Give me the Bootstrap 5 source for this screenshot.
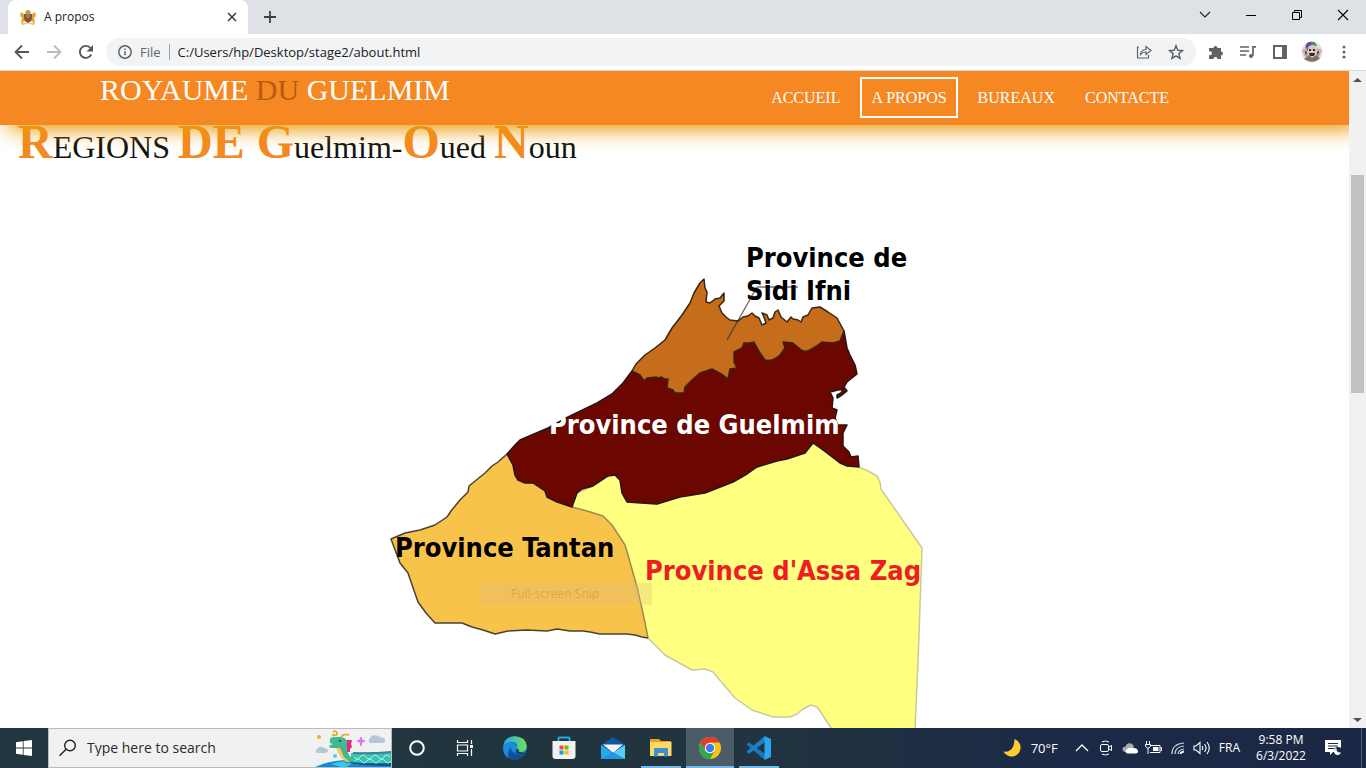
<!DOCTYPE html>
<html lang="fr">
<head>
<meta charset="utf-8">
<meta name="viewport" content="width=device-width, initial-scale=1">
<title>A propos</title>
<link href="https://cdn.jsdelivr.net/npm/bootstrap@5.3.0/dist/css/bootstrap.min.css" rel="stylesheet">
<script src="https://cdn.jsdelivr.net/npm/bootstrap@5.3.0/dist/js/bootstrap.bundle.min.js"></script>
<style>
body { font-family: "Open Sans", "Noto Sans", sans-serif; font-size: 12px; line-height: 16px; color: #202124; }
button { background: none; border: 0; padding: 0; color: inherit; }
svg { display: block; flex: none; }
.glyph { display: flex; align-items: center; justify-content: center; flex: none; }

/* browser frame */
.tabstrip { background: #dee1e6; height: 34px; }
.tab-item { width: 240px; height: 34px; border-radius: 8px 8px 0 0; }
.win-btn { width: 46px; height: 30px; }
.toolbar { height: 37px; border-bottom: 1px solid #d5d7da; color: #5f6368; padding: 0 2px; }
.nav-btn { width: 32px; height: 28px; }
.omnibox { background: #f1f3f4; height: 28px; border-radius: 14px; }
.omnibox input { font-size: 13px; line-height: 20px; background: none; border: 0; padding: 0; color: #202124; outline: 0; min-width: 0; }
.scheme { font-size: 13px; border-right: 1px solid #9aa0a6; }

/* web page */
.page { font-family: "Liberation Serif", serif; background: #fff; min-width: 0; }
.site-head { background: #f58822; height: 54px; padding: 2px 170px 0 100px; box-shadow: 8px 5px 20px #ea9b08; z-index: 1; }
.site-name { font-size: 30px; line-height: 34px; color: #fff; text-decoration: none; }
.site-name span { color: #b35c0d; }
.site-menu { gap: 10px; padding-top: 4px; }
.site-menu a { color: #fff; font-size: 16px; line-height: 21px; padding: 8px; border: 2px solid transparent; text-decoration: none; }
.site-menu a.active { border-color: #fff; padding: 8px 9px; }
.region-title { font-size: 32px; line-height: 34px; font-weight: 400; color: #111; padding-left: 18px; margin-bottom: 66px; }
.region-title b { font-size: 48px; color: #f58822; }
.map text { font-family: "DejaVu Sans Condensed", "DejaVu Sans", sans-serif; font-weight: 700; font-size: 27px; }
.map .ghost { font-family: "Open Sans", sans-serif; font-weight: 400; font-size: 12px; }
.scroll-rail { width: 17px; background: #f1f1f1; }
.scroll-thumb { width: 13px; background: #c1c1c1; }

/* taskbar */
.taskbar { height: 40px; background: linear-gradient(90deg, #20373f, #21343f 55%, #1b2947 80%, #1b2845); color: #fff; }
.start { width: 48px; }
.search-box { width: 344px; background: #f1f1f1; border: 1px solid #bcbcbc; }
.search-box input { background: none; border: 0; outline: 0; padding: 0; font-size: 14px; color: #222; width: 220px; }
.search-box input::placeholder { color: #2b2b2b; opacity: 1; }
.app-btn { width: 49px; height: 40px; }
.app-btn.open { border-bottom: 2px solid #76b9ed; padding-top: 2px; width: 40px; margin: 0 5px 0 4px; }
.app-btn.front { background: #4c5c66; width: 48px; margin: 0 1px 0 0; }
.tray-btn { width: 24px; height: 40px; }
.weather { font-size: 13px; }
.lang { padding: 0 5px; }
.clock { width: 64px; }
.notice { margin-right: 14px; }
</style>
</head>
<body class="vh-100 d-flex flex-column overflow-hidden">

<div class="tabstrip d-flex flex-shrink-0 ps-2">
  <div class="tab-item bg-white d-flex align-items-center px-2">
    <svg class="ms-1" width="16" height="16" viewBox="0 0 16 16"><path d="M5 3Q8-1 11 3L10 5H6Z" fill="#c99a2b"/><path d="M1 3 4 5 5 12 1 14 2 9 0 7ZM15 3 12 5 11 12 15 14 14 9 16 7Z" fill="#dba733"/><path d="M4 5h8v5q-1 3-4 4-3-1-4-4Z" fill="#b5471f"/><circle cx="8" cy="7" r="2" fill="#3aa0c0"/><path d="M6 10h4l-2 2Z" fill="#28794a"/><path d="M1 13q7 3 14 0l-1 3q-6-2-12 0Z" fill="#e2b64b"/></svg>
    <span class="ms-2 flex-grow-1">A propos</span>
    <button class="glyph" aria-label="Close tab"><svg width="16" height="16" viewBox="0 0 16 16" stroke="#3c4043" stroke-width="1.6"><path d="m4 4 8 8M12 4l-8 8"/></svg></button>
  </div>
  <button class="glyph ms-2 px-1" aria-label="New tab"><svg width="20" height="16" viewBox="0 0 20 16" stroke="#3c4043" stroke-width="1.8"><path d="M10 2v12M4 8h12"/></svg></button>
  <div class="ms-auto d-flex">
    <button class="win-btn glyph" aria-label="Search tabs"><svg width="12" height="8" viewBox="0 0 12 8" fill="none" stroke="#222" stroke-width="1.1"><path d="m1 1 5 5 5-5"/></svg></button>
    <button class="win-btn glyph" aria-label="Minimize"><svg width="10" height="10" viewBox="0 0 10 10" fill="#000"><path d="M0 5h10v1H0z"/></svg></button>
    <button class="win-btn glyph" aria-label="Restore"><svg width="10" height="10" viewBox="0 0 10 10" fill="none" stroke="#000"><path d="M.5 2.500h7v7h-7zM2.500 2.500v-2h7v7h-2"/></svg></button>
    <button class="win-btn glyph" aria-label="Close"><svg width="12" height="12" viewBox="0 0 12 12" stroke="#000" stroke-width="1.1"><path d="m1 1 10 10M11 1 1 11"/></svg></button>
  </div>
</div>

<div class="toolbar bg-white d-flex align-items-center flex-shrink-0">
  <div class="d-flex ms-1 me-1">
    <button class="nav-btn glyph" aria-label="Back"><svg width="16" height="16" viewBox="0 0 16 16" fill="none" stroke="#54585c" stroke-width="1.8"><path d="M15 8H2M8 1.500 1.500 8 8 14.500"/></svg></button>
    <button class="nav-btn glyph" aria-label="Forward"><svg width="16" height="16" viewBox="0 0 16 16" fill="none" stroke="#b9bbbe" stroke-width="1.8"><path d="M1 8h13M8 1.500 14.500 8 8 14.500"/></svg></button>
    <button class="nav-btn glyph" aria-label="Reload"><svg width="16" height="16" viewBox="0 0 16 16"><path d="M13.300 10.500A6 6 0 1 1 12.500 4" fill="none" stroke="#54585c" stroke-width="1.9"/><path d="M15 1v6.500H8.500Z" fill="#54585c"/></svg></button>
  </div>
  <div class="omnibox d-flex align-items-center flex-grow-1 ps-2 pe-1">
    <svg class="mx-1" width="14" height="14" viewBox="0 0 14 14" fill="none" stroke="#5f6368" stroke-width="1.500"><circle cx="7" cy="7" r="6.200"/><path d="M7 6.200v4M7 3.500v1.600"/></svg>
    <label class="scheme ms-1 pe-2 me-2" for="address">File</label>
    <input id="address" class="flex-grow-1" type="text" value="C:/Users/hp/Desktop/stage2/about.html">
    <button class="glyph nav-btn" aria-label="Share"><svg width="16" height="16" viewBox="0 0 16 16" fill="none" stroke="#5f6368" stroke-width="1.200"><path d="M3 3H1.500v11h11v-3M4.500 10.500Q5 6 10 5.500V2.500L15 6.500 10 10.500V8Q6.500 8 4.500 10.500Z"/></svg></button>
    <button class="nav-btn glyph" aria-label="Bookmark"><svg width="16" height="16" viewBox="0 0 16 16" fill="none" stroke="#5f6368" stroke-width="1.500"><path d="m8 1.800 1.800 4.400 4.700.4-3.600 3 1.100 4.700L8 11.800l-4 2.500 1.100-4.700-3.600-3 4.700-.4Z"/></svg></button>
  </div>
  <div class="d-flex ms-1 me-1">
    <button class="nav-btn glyph" aria-label="Extensions"><svg width="16" height="16" viewBox="0 0 16 16" fill="#5f6368"><path d="M1 4h4.500a2 2 0 1 1 4 0H13v3.500a2 2 0 1 1 0 4V15H9.500a2 2 0 1 0-4 0H1v-4a2 2 0 1 0 0-3.500Z"/></svg></button>
    <button class="nav-btn glyph" aria-label="Media"><svg width="16" height="14" viewBox="0 0 16 14" fill="none" stroke="#5f6368" stroke-width="1.700"><path d="M0 2h9M0 6h9M0 10h6M16 1.800h-3v9"/><circle cx="11" cy="11" r="2" fill="#5f6368" stroke="none"/></svg></button>
    <button class="nav-btn glyph" aria-label="Side panel"><svg width="14" height="14" viewBox="0 0 14 14"><path fill="#5f6368" d="M0 0h14v14H0z"/><path fill="#fff" d="M2 2h7v10H2z"/></svg></button>
    <button class="nav-btn glyph" aria-label="Profile"><svg width="22" height="22" viewBox="0 0 22 22"><circle cx="11" cy="11" r="10.500" fill="#e3e0de"/><path d="M5 10Q3 3 8 1q6-1 8 4l-5-1-4 6Z" fill="#6b46a8"/><path d="M10 1q4-1 5 3l-4 1Z" fill="#3f9b50"/><path d="M7 6q4-4 9 0l-1 8-4 4-4-4Z" fill="#d9c8c2"/><path d="M1 9l5-2 1 8-3 1ZM21 9l-5-2-1 8 3 1Z" fill="#cbaea3"/><path d="M8 8h2v2H8zM12 8h2v2h-2zM8 12h6l-1 3H9zM4 10l2 1-1 4ZM18 10l-2 1 1 4Z" fill="#302a2c"/><path d="M3 18l5-4 3 3 4-3 4 3q-7 7-16 1Z" fill="#7d716b"/></svg></button>
    <button class="nav-btn glyph" aria-label="Menu"><svg width="4" height="14" viewBox="0 0 4 14" fill="#5f6368"><circle cx="2" cy="2" r="1.500"/><circle cx="2" cy="7" r="1.500"/><circle cx="2" cy="12" r="1.500"/></svg></button>
  </div>
</div>

<div class="d-flex flex-grow-1 overflow-hidden">
  <div class="page flex-grow-1 overflow-hidden">
    <header class="site-head position-relative d-flex justify-content-between align-items-start">
      <a class="site-name" href="#">ROYAUME <span>DU</span> GUELMIM</a>
      <nav class="site-menu d-flex">
        <a href="#">ACCUEIL</a>
        <a class="active" href="#">A PROPOS</a>
        <a href="#">BUREAUX</a>
        <a href="#">CONTACTE</a>
      </nav>
    </header>
    <h1 class="region-title"><b>R</b>EGIONS <b>DE G</b>uelmim-<b>O</b>ued <b>N</b>oun</h1>
    <svg class="map mx-auto" width="600" height="600" viewBox="375 230 600 600" stroke-linejoin="round">
      <path fill="#ffff80" stroke="#c9c9a0" stroke-width="1.500" d="M572 507 577 493 593 486 608 476 615 475 620 480 622 493 627 502 657 504 813 443 859 467 868 471 877 476 880 482 881 489 922 548 918 663 915 728 912 800H870L831 728 820 711 817 707 811 705 803 709 797 714 790 717 773 717 752 710 735 698 713 672 705 669 692 670 665 655 648 638Z"/>
      <path fill="#f8c34a" d="M507 454 498 462 492 466 485 473 469 486 468 492 460 500 451 511 447 517 435 525 420 530 405 533 391 539 400 563 408 573 418 602 426 613 435 623 462 623 472 627 483 630 495 634 508 631 527 630 547 631 557 629 570 631 583 631 590 632 600 634 627 634 635 635 642 637 648 638 643 613 637 587 628 555 625 545 612 525 603 516 587 511 572 507Z"/>
      <path fill="none" stroke="#9a8a55" stroke-width="1.500" d="M648 638 643 613 637 587 628 555 625 545 612 525 603 516 587 511 572 507"/>
      <path fill="none" stroke="#4c4130" stroke-width="1.500" d="M507 454 498 462 492 466 485 473 469 486 468 492 460 500 451 511 447 517 435 525 420 530 405 533 391 539 400 563 408 573 418 602 426 613 435 623 462 623 472 627 483 630 495 634 508 631 527 630 547 631 557 629 570 631 583 631 590 632 600 634 627 634 635 635 642 637 648 638"/>
      <path fill="#6b0600" stroke="#2a1512" stroke-width="1.500" d="M632 371 623 383 612 394 597 403 568 417 548 428 520 440 515 445 507 454 513 465 515 475 518 480 525 483 533 483 545 491 547 497 557 502 572 507 577 493 582 489 593 486 608 476 615 475 620 480 622 493 627 502 657 504 680 497 705 493 733 482 747 474 757 467 777 461 787 459 805 453 813 443 823 450 840 463 847 466 859 467 858 456 851 457 849 452 843 446 843 433 847 425 838 425 835 418 837 410 832 408 833 398 830 392 838 390 843 389 841 393 837 395 837 398 842 395 847 391 844 387 847 382 857 374 855 365 850 355 847 348 844 331 760 330 680 360Z"/>
      <path fill="#c56d1b" stroke="#3b2412" stroke-width="1.500" d="M632 371 636 364 645 355 655 348 665 340 672 328 682 315 690 303 694 293 700 283 704 279 705 288 707 292 706 302 710 303 715 299 720 298 724 293 724 301 719 306 722 313 726 317 730 320 738 321 743 317 748 316 752 313 755 316 759 318 762 325 766 323 764 317 762 313 767 315 769 320 773 318 775 312 778 310 781 317 787 322 791 317 793 319 798 320 801 322 803 317 808 315 812 308 820 307 828 312 837 318 844 331 840 341 833 343 822 342 815 347 810 350Q804 353 800 349L793 343 783 342 785 348 780 355Q772 362 765 360L760 353 754 342 750 343 744 343 742 348 734 352 734 362 737 368 730 369 728 379 723 375 712 369 700 373 692 380 685 387 684 393 675 393 673 390 667 388 668 379 664 379 662 377 658 378 656 377 647 378 644 381 640 375Z"/>
      <path fill="none" stroke="#2b2b2b" stroke-opacity=".65" stroke-width="1.500" d="M727 340 757 287H798"/>
      <text x="746" y="267">Province de</text>
      <text x="746" y="300">Sidi Ifni</text>
      <text x="549" y="434" fill="#fff">Province de Guelmim</text>
      <text x="395" y="557">Province Tantan</text>
      <text x="645" y="580" fill="#ee1c25">Province d'Assa Zag</text>
      <path d="M480 583h172v22H480z" fill="#e2bd7c" fill-opacity=".35"/>
      <text class="ghost" x="511" y="598" fill="#deaa3b">Full-screen Snip</text>
    </svg>
  </div>
  <div class="scroll-rail d-flex flex-column align-items-center flex-shrink-0 overflow-hidden">
    <svg width="17" height="17" viewBox="0 0 17 17"><path d="M4 11h9L8.500 7Z" fill="#505050"/></svg>
    <div class="flex-grow-1 d-flex flex-column align-items-center">
      <div style="height:14%"></div>
      <div class="scroll-thumb" style="height:35%"></div>
    </div>
    <svg width="17" height="17" viewBox="0 0 17 17"><path d="M4 7h9L8.500 11Z" fill="#505050"/></svg>
  </div>
</div>

<div class="taskbar d-flex flex-shrink-0 align-items-stretch">
  <button class="start glyph" aria-label="Start"><svg width="16" height="16" viewBox="0 0 16 16" fill="#fff"><path d="M0 2.200 6.800 1.200V7.600H0ZM7.600 1 16 0v7.600H7.600ZM0 8.400h6.800v6.400L0 13.800ZM7.600 8.400H16V16L7.600 15Z"/></svg></button>
  <div class="search-box d-flex align-items-center overflow-hidden">
    <svg class="ms-2" width="22" height="18" viewBox="0 0 22 18" fill="none" stroke="#222" stroke-width="1.400"><circle cx="13" cy="6.500" r="5.300"/><path d="m9.200 10.300-6.700 6.500"/></svg>
    <input class="ms-2" type="text" placeholder="Type here to search" aria-label="Search">
    <svg class="ms-auto" width="80" height="38" viewBox="312 729 80 38">
      <path d="M314 768Q330 760 350 760L392 763v8h-80Z" fill="#1689d0"/><path d="M332 764q15-5 25-2l-12 6Z" fill="#36c5ee"/>
      <path d="M345 762q20-4 47 1v3q-30 0-47-4Z" fill="#0b519c"/>
      <path d="M352 753Q375 752 392 752v11q-24 1-40-1Z" fill="#39c3b5"/>
      <path d="M354 753Q372 754 392 752" fill="none" stroke="#3d7f93" stroke-width="2"/>
      <path d="M355 757q3 4 6 0t6 0 6 0 6 0 6 0 6 0M356 761q3-4 6 0t6 0 6 0 6 0 6 0 6 0" fill="none" stroke="#b9f3df"/>
      <path d="M331 739q1-2 4-2h7q7 1 7 8l-1 6q2 5 6 8l-2 3q-9-2-10-8l-3-6h-7q-3-1-1-3 2 0 3-1l-3-1Z" fill="#3fb991"/>
      <path d="M337 748h4l4 9 7 6q-9-2-12-9Z" fill="#f5cb53"/>
      <path d="M348 740h5l-1 4 1 3-2 2v3h-3Z" fill="#e22a86"/>
      <path d="M333 735q6 1 5-2t-4-1M342 737q3-4 8-2" fill="none" stroke="#eda52f" stroke-width="1.800"/><circle cx="341" cy="741" r="1" fill="#143c42"/>
      <path d="M362 737l1 3 3 1-3 1-1 4-1-4-3-1 3-1Z" fill="#dd75f3" stroke="#dd75f3"/>
      <path d="M371 743a3 3 0 0 1 0-5 6 5 0 0 1 10-1q6 1 5 4 0 2-3 2Z" fill="#b5c7d7"/><path d="M319 753q-4-1-1-4 3-4 7-1 4 0 4 3-1 2-3 2Z" fill="#b5c7d7"/>
      <circle cx="320" cy="737" r="2" fill="#ffad17"/><circle cx="336" cy="756" r="2" fill="#5ccbe5"/>
    </svg>
  </div>
  <button class="app-btn glyph" aria-label="Cortana"><svg width="18" height="18" viewBox="0 0 18 18"><circle cx="9" cy="9" r="6.800" fill="none" stroke="#fff" stroke-width="2"/></svg></button>
  <button class="app-btn glyph" aria-label="Task view"><svg width="20" height="16" viewBox="0 0 20 16" fill="none" stroke="#fff" stroke-width="1.200"><path d="M1.500 0v2.500h10V0M1.500 5h10v6h-10zM1.500 16v-2.500h10V16M15.500 0v4M15.500 9v7"/><path d="M14 5h3v3h-3z" fill="#fff" stroke="none"/></svg></button>
  <button class="app-btn glyph" aria-label="Edge"><svg width="24" height="24" viewBox="0 0 24 24"><defs><linearGradient id="eg" x1="0" x2="1"><stop stop-color="#28a7e6"/><stop offset="1" stop-color="#6be35b"/></linearGradient></defs><circle cx="12" cy="12" r="11.800" fill="#0f65b5"/><path d="M.2 11Q1 .5 12 .2 23 1 23.800 10q0 6-6 6-5 0-4-3 2-6-4-7Q3 6 .2 11Z" fill="url(#eg)"/><path d="M.3 10Q4 5 10 6.500q5 2 4 6-2 3-1 4-5 0-5-5-5 4-3 11Q-.5 18 .3 10Z" fill="#1d8bdd"/><path d="M8 12q0 10 14 6-6 8-13 5-5-3-1-11Z" fill="#124d91"/><path d="M13.500 13q-2 5 5 5 3 0 4-1.200-4 .5-6-.8-1.500-1-1-3Z" fill="#21363f"/></svg></button>
  <button class="app-btn glyph" aria-label="Store"><svg width="24" height="24" viewBox="0 0 24 24"><path d="M6.500 6V2.500q0-1 1-1h9q1 0 1 1V6" fill="none" stroke="#25a8e8" stroke-width="2"/><path d="M.5 5h23v15q0 3-3 3h-17q-3 0-3-3Z" fill="#f1f1f1"/><path fill="#f25022" d="M7.500 9.500h4v4h-4z"/><path fill="#7fba00" d="M12.500 9.500h4v4h-4z"/><path fill="#00a4ef" d="M7.500 14.500h4v4h-4z"/><path fill="#ffb900" d="M12.500 14.500h4v4h-4z"/></svg></button>
  <button class="app-btn glyph" aria-label="Mail"><svg width="24" height="24" viewBox="0 0 24 24"><path d="M0 9 12 1l12 8v5H0Z" fill="#0c59a4"/><path d="M2 8.500h20L12 17Z" fill="#f5f5f5"/><path d="M0 9l12 8 12-8v14H0Z" fill="#2aa9e8"/><path d="M24 9 12 17l12 6Z" fill="#5acbf7"/><path d="M0 23 12 16 24 23Z" fill="#2297df"/></svg></button>
  <button class="app-btn open glyph" aria-label="File Explorer"><svg width="22" height="20" viewBox="0 0 22 20"><path d="M0 1h9l2 2h10v15H0Z" fill="#e7a11d"/><path d="M0 4h21.500v14H0Z" fill="#ffd968"/><path d="M4 18.500V11q0-1 1-1h12q1 0 1 1v7.500h-4V15H8v3.500Z" fill="#3b91d2"/></svg></button>
  <button class="app-btn open front glyph" aria-label="Chrome"><svg width="22" height="22" viewBox="0 0 22 22"><circle cx="11" cy="11" r="11" fill="#fbc116"/><path d="M1.470 5.500A11 11 0 0 1 20.530 5.500H11L6.240 13.750Z" fill="#e33b2e"/><path d="M1.470 5.500A11 11 0 0 0 11 22l4.760-8.250L11 16 6.240 13.750Z" fill="#2da94f"/><circle cx="11" cy="11" r="5.200" fill="#fff"/><circle cx="11" cy="11" r="4.200" fill="#3b7ded"/></svg></button>
  <button class="app-btn open glyph" aria-label="VS Code"><svg width="24" height="24" viewBox="0 0 24 24"><path d="m0 8 2-1.700L18 18v6L0 9Z" fill="#1779bd"/><path d="m0 16 2 1.700L18 6V0L0 15Z" fill="#1680ca"/><path d="M17.500 0 24 3v18l-6.500 3Z" fill="#2aa6ef"/></svg></button>

  <div class="ms-auto d-flex align-items-center">
    <button class="glyph me-2" aria-label="Weather">
      <svg width="20" height="20" viewBox="0 0 20 20"><path d="M11.500 1a9 9 0 1 1-11 12.500Q11 15 11.500 1Z" fill="#ffcb2e"/></svg>
      <span class="weather ms-2">70°F</span>
    </button>
    <button class="tray-btn glyph ms-1" aria-label="Hidden icons"><svg width="14" height="8" viewBox="0 0 14 8" fill="none" stroke="#fff" stroke-width="1.300"><path d="m1 7 6-6 6 6"/></svg></button>
    <button class="tray-btn glyph" aria-label="Meet now"><svg width="12" height="16" viewBox="0 0 12 16" fill="none" stroke="#fff"><rect x=".5" y="4.500" width="8" height="7" rx="1.500"/><path d="M9 7l2.500-1.500v5L9 9M2 2q3-2 7 0M2 14q3 2 7 0"/></svg></button>
    <button class="tray-btn glyph" aria-label="OneDrive"><svg width="16" height="11" viewBox="0 0 16 11"><path d="M3 9Q0 8 .5 5.500 1 3.500 3.500 3.500 5-.5 9 .5q2 .5 3 3L8 9Z" fill="#aaa"/><path d="M5 10.500q-3-2 0-4.500Q8 3.500 11 5q4-.5 5 3 0 2.500-2.500 2.500Z" fill="#fff"/></svg></button>
    <button class="tray-btn glyph" aria-label="Battery"><svg width="17" height="14" viewBox="0 0 17 14" fill="none" stroke="#fff"><path d="M6 4.500h9v7H5M15.500 6.500h1v3h-1M1.500 0v3M4.500 0v3M.5 3.500h5v2l-2 1.500h-1L.5 5.500ZM3 7v6"/><path d="M8 6h5.500v4H8z" fill="#fff" stroke="none"/></svg></button>
    <button class="tray-btn glyph" aria-label="Network"><svg width="14" height="14" viewBox="0 0 14 14" fill="none" stroke="#fff" stroke-width="1.200"><path d="M1 13Q1 3 13 2M4 13q0-7 9-8M7 13q0-4 6-5" opacity=".8"/><path d="M9.500 13q0-2 3.500-2.500" stroke-width="1.800"/></svg></button>
    <button class="tray-btn glyph" aria-label="Volume"><svg width="17" height="14" viewBox="0 0 17 14" fill="none" stroke="#fff" stroke-width="1.100"><path d="M1 5h2l4-3.500v11L3 9H1ZM9 5q1.500 2 0 4M11.500 3q3 4 0 8M14 1q4.500 6 0 12"/></svg></button>
    <button class="lang" aria-label="Language">FRA</button>
    <button class="clock ms-1" aria-label="Clock">9:58 PM<br>6/3/2022</button>
    <button class="notice glyph ms-2" aria-label="Notifications"><svg class="mx-1" width="18" height="16" viewBox="0 0 18 16"><path d="M0 0h16v12H8l-3 3v-3H0Z" fill="#fff"/><path d="M3 3.500h10M3 6h10M3 8.500h6" stroke="#1b2845"/><circle cx="13" cy="11" r="4" fill="#1b2845"/><path d="M11.500 8q-.5 5 4.500 4.500a3.600 3.600 0 1 1-4.500-4.500Z" fill="#fff"/></svg></button>
    <div class="vr align-self-stretch me-1"></div>
  </div>
</div>
</body>
</html>
